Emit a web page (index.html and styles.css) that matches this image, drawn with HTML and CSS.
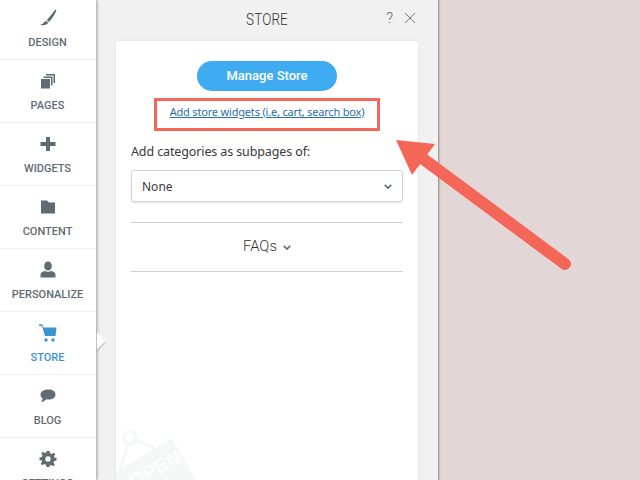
FILE: index.html
```html
<!DOCTYPE html>
<html lang="en">
<head>
<meta charset="utf-8">
<title>Store</title>
<link rel="stylesheet" href="styles.css">
</head>
<body>
<div class="app">
  <nav class="sidebar">
    <a class="nav-item nav-first">
      <svg class="nav-icon" viewBox="0 0 20 20"><path d="M17.500 1.500 18.500 2.500C16.500 7 14 11 11 14L8.800 12.200C11.500 9 14.500 5 17.500 1.500Z M8 13 10.300 14.800C9 17 6.500 17.500 2 17 3.500 16.300 4.800 16 5.500 15 6.200 14 6.800 13.300 8 13Z"/></svg>
      <span>DESIGN</span>
    </a>
    <a class="nav-item">
      <svg class="nav-icon" viewBox="0 0 20 20"><path d="M3 8H12V17.500H3Z M5.500 5.500H14.500V14.500H13V7H5.500Z M8 3H17V12H15.500V4.500H8Z"/></svg>
      <span>PAGES</span>
    </a>
    <a class="nav-item">
      <svg class="nav-icon" viewBox="0 0 20 20"><path d="M8 3H12V8H17.500V12H12V17H8V12H2.500V8H8Z"/></svg>
      <span>WIDGETS</span>
    </a>
    <a class="nav-item">
      <svg class="nav-icon" viewBox="0 0 20 20"><path d="M3 3.500H9L11 5.500H17V16.500H3Z"/></svg>
      <span>CONTENT</span>
    </a>
    <a class="nav-item">
      <svg class="nav-icon" viewBox="0 0 20 20"><path d="M10 1.500C12.500 1.500 13.800 3.500 13.800 6 13.800 8.500 12.500 10.500 10 10.500 7.500 10.500 6.200 8.500 6.200 6 6.200 3.500 7.500 1.500 10 1.500Z M7 11C8 12 12 12 13 11 16 11.500 17.500 13 17.500 15V17.500H2.500V15C2.500 13 4 11.500 7 11Z"/></svg>
      <span>PERSONALIZE</span>
    </a>
    <a class="nav-item nav-active">
      <svg class="nav-icon" viewBox="0 0 20 20"><path d="M1 1.500H4.500L5.500 4.500H18.500L17.500 13H7L4 3H1Z"/><circle cx="8" cy="17" r="1.700"/><circle cx="15" cy="17" r="1.700"/></svg>
      <span>STORE</span>
    </a>
    <a class="nav-item">
      <svg class="nav-icon" viewBox="0 0 20 20"><path d="M10.500 3.500C14.800 3.500 17.500 5.500 17.500 8.500 17.500 11.500 14.500 13.500 10.500 13.500 9.700 13.500 9 13.400 8.300 13.200 6.800 14.800 5 15.700 3.200 16 4 15 4.500 13.800 4.600 12.500 3.200 11.500 2.500 10.100 2.500 8.500 2.500 5.500 6 3.500 10.500 3.500Z"/></svg>
      <span>BLOG</span>
    </a>
    <a class="nav-item">
      <svg class="nav-icon" viewBox="0 0 20 20"><path fill-rule="evenodd" d="M8.500 2H11.500L12 4.300 13.800 5 15.800 3.700 17.300 5.200 16 7.200 16.700 9 18.500 8.500V11.500L16.200 12 15.500 13.800 16.800 15.800 15.300 17.300 13.300 16 11.500 16.700 11.500 18H8.500L8 15.800 6.200 15 4.200 16.300 2.700 14.800 4 12.800 3.300 11 1.500 11.500V8.500L3.800 8 4.500 6.200 3.200 4.200 4.700 2.700 6.700 4 8.500 3.300ZM10 7.300A2.700 2.700 0 1 0 10 12.700 2.700 2.700 0 1 0 10 7.300Z"/></svg>
      <span>SETTINGS</span>
    </a>
  </nav>

  <section class="panel">
    <header class="panel-head">
      <h1 class="panel-title">STORE</h1>
      <div class="panel-actions">
        <span class="help">?</span>
        <svg class="close" viewBox="0 0 12 12"><path d="M1 1 11 11M11 1 1 11"/></svg>
      </div>
    </header>
    <div class="card">
      <a class="manage-btn">Manage Store</a>
      <a class="widgets-link">Add store widgets (i.e, cart, search box)</a>
      <label class="field-label">Add categories as subpages of:</label>
      <div class="select">
        <span>None</span>
        <svg class="chev" viewBox="0 0 10 6"><path d="M1 1 5 5 9 1"/></svg>
      </div>
      <div class="faq">
        <span>FAQs</span>
        <svg class="chev chev-faq" viewBox="0 0 10 6"><path d="M1 1 5 5 9 1"/></svg>
      </div>
      <svg class="sign" viewBox="0 0 110 70">
        <path class="sign-rope" d="M14 28 4 60M14 28 38 38"/>
        <circle class="sign-ring" cx="14" cy="28" r="6"/>
        <path class="sign-board" d="M0 62 56 28 80 70H0Z"/>
        <text class="sign-text" transform="translate(18 79) rotate(-30)">OPEN</text>
      </svg>
    </div>
  </section>

  <main class="canvas"></main>
</div>

<div class="callout-box"></div>
<svg class="arrow" viewBox="0 0 640 480">
  <path class="arrow-shaft" d="M565 264 422 158"/>
  <path class="arrow-head" d="M396 140 435 144 412 175Z"/>
</svg>
</body>
</html>
```

FILE: styles.css
```css
* { box-sizing: border-box; }

html, body {
  margin: 0;
  height: 480px;
  overflow: hidden;
}

body {
  position: relative;
  font-family: "Noto Sans", sans-serif;
  background: #e3d6d6;
}

.app {
  display: flex;
  height: 480px;
}

/* Sidebar */
.sidebar {
  position: relative;
  z-index: 2;
  width: 96px;
  flex: none;
  height: 480px;
  background: #fff;
  box-shadow: 1px 0 3px rgba(0, 0, 0, .35);
}

.nav-item {
  position: relative;
  display: flex;
  flex-direction: column;
  align-items: center;
  height: 63px;
  padding-top: 11px;
  padding-right: 1px;
  border-bottom: 1px solid #efefef;
  font-family: Roboto, sans-serif;
  font-size: 11px;
  font-weight: 500;
  line-height: 14px;
  color: #5f6c72;
}

.nav-first {
  height: 60px;
  padding-top: 8px;
}

.nav-item:last-child { border-bottom: 0; }

.nav-icon {
  width: 20px;
  height: 20px;
  margin-bottom: 8px;
  fill: currentColor;
}

.nav-active { color: #3a94ce; }

.nav-active::after {
  content: "";
  position: absolute;
  right: -7px;
  top: 23px;
  width: 12px;
  height: 12px;
  background: #fff;
  transform: rotate(45deg);
  box-shadow: 1px 1px 2px rgba(0, 0, 0, .25);
  clip-path: polygon(-20% -20%, 130% -20%, 130% 130%);
}

/* Panel */
.panel {
  position: relative;
  width: 342px;
  flex: none;
  height: 480px;
  background: #f1f1f1;
  padding: 0 20px;
  box-shadow: 1px 0 2px rgba(80, 60, 60, .55);
  overflow: hidden;
}

.panel-head {
  position: relative;
  height: 41px;
  display: flex;
  align-items: center;
  justify-content: center;
}

.panel-title {
  margin: 0 0 3px;
  font-family: Roboto, sans-serif;
  font-size: 16px;
  font-weight: 300;
  transform: scaleX(.84);
  color: #333;
  letter-spacing: .2px;
}

.panel-actions {
  position: absolute;
  top: 12px;
  right: 2px;
  display: flex;
  align-items: center;
  gap: 11px;
}

.help {
  font-family: Roboto, sans-serif;
  font-weight: 300;
  font-size: 15px;
  line-height: 12px;
  color: #666;
}

.close {
  width: 12px;
  height: 12px;
  fill: none;
  stroke: #7a7a7a;
  stroke-width: 1;
}

.card {
  position: relative;
  width: 302px;
  height: 470px;
  background: #fff;
  border-radius: 3px;
  padding: 20px 15px 0;
  box-shadow: 0 0 3px rgba(0, 0, 0, .08);
  display: flex;
  flex-direction: column;
  overflow: hidden;
}

.manage-btn {
  align-self: center;
  width: 140px;
  height: 30px;
  border-radius: 15px;
  background: #3fabf0;
  color: #fff;
  font-family: Roboto, sans-serif;
  font-size: 13px;
  font-weight: 500;
  line-height: 30px;
  text-align: center;
}

.widgets-link {
  align-self: center;
  margin-top: 13px;
  font-size: 11px;
  line-height: 16px;
  letter-spacing: -.18px;
  color: #2b6ea8;
  text-decoration: underline;
}

.field-label {
  margin-top: 23px;
  font-size: 12.500px;
  line-height: 18px;
  letter-spacing: -.12px;
  color: #3a3a3a;
}

.select {
  margin-top: 9px;
  height: 32px;
  border: 1px solid #cfd6da;
  border-radius: 3px;
  box-shadow: 0 1px 2px rgba(0, 0, 0, .12);
  padding: 0 10px;
  display: flex;
  align-items: center;
  justify-content: space-between;
  font-size: 12px;
  color: #3a3a3a;
}

.chev {
  width: 8px;
  height: 5px;
  fill: none;
  stroke: #5f6c72;
  stroke-width: 2;
}

.faq {
  margin-top: 20px;
  height: 50px;
  padding-bottom: 2px;
  border-top: 1px solid #ccd3d6;
  border-bottom: 1px solid #ccd3d6;
  display: flex;
  align-items: center;
  justify-content: center;
  gap: 6px;
  font-family: Roboto, sans-serif;
  font-size: 14.800px;
  font-weight: 300;
  color: #333;
}

.chev-faq { margin-top: 3px; }

.sign {
  position: absolute;
  left: 0;
  top: 369px;
  width: 110px;
  height: 70px;
}

.sign-rope {
  fill: none;
  stroke: #f6f7f7;
  stroke-width: 3;
}

.sign-ring {
  fill: #fff;
  stroke: #f6f7f7;
  stroke-width: 4;
}

.sign-board { fill: #f6f7f7; }

.sign-text {
  font-family: "Liberation Sans", sans-serif;
  font-size: 20px;
  font-weight: 700;
  fill: #fdfdfd;
}

/* Canvas */
.canvas {
  flex: 1;
  background: #e3d6d6;
}

/* Annotation overlay */
.callout-box {
  position: absolute;
  left: 154px;
  top: 98px;
  width: 226px;
  height: 33px;
  border: 3px solid #f4675a;
  z-index: 3;
}

.arrow {
  position: absolute;
  left: 0;
  top: 0;
  width: 640px;
  height: 480px;
  z-index: 3;
  pointer-events: none;
}

.arrow-shaft {
  fill: none;
  stroke: #f46758;
  stroke-width: 12;
  stroke-linecap: round;
}

.arrow-head { fill: #f46758; }
```
